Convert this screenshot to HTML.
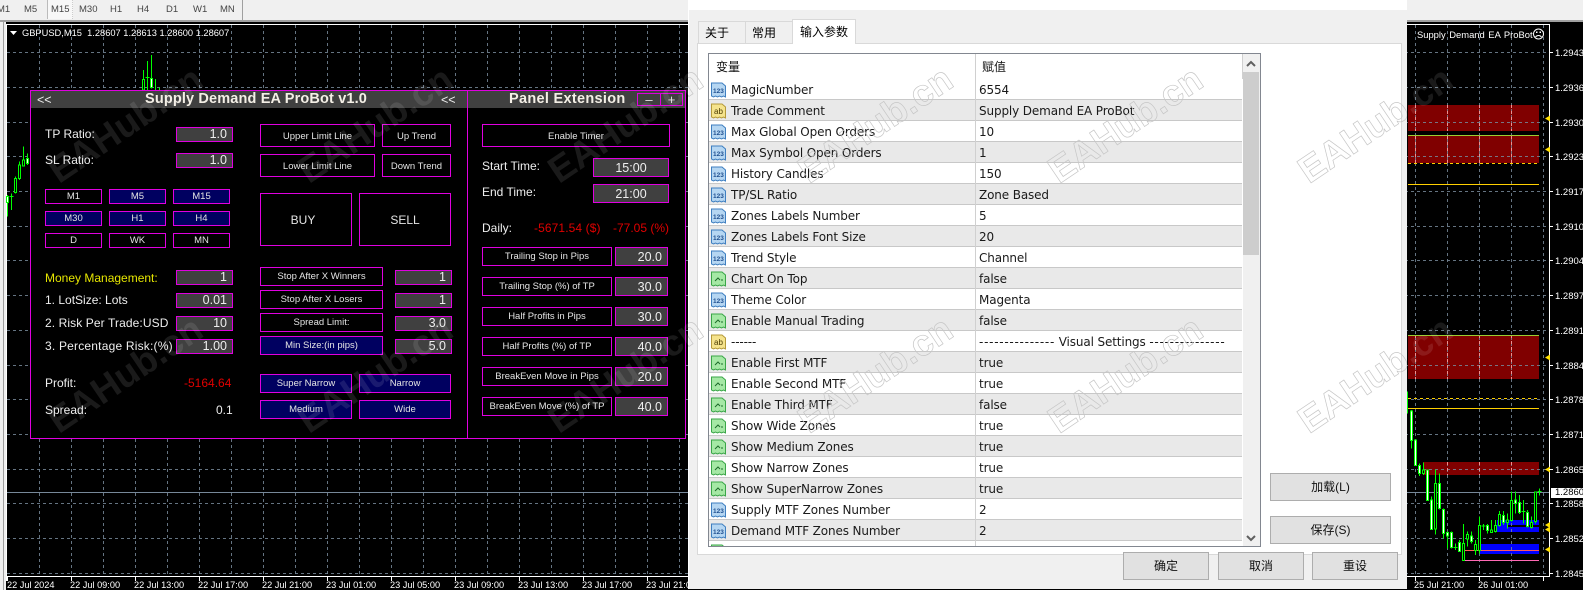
<!DOCTYPE html>
<html><head><meta charset="utf-8"><style>
html,body{margin:0;padding:0;background:#000;overflow:hidden}
#r{position:relative;width:1583px;height:590px;overflow:hidden;background:#000;font-family:"Liberation Sans",sans-serif}
#r div,#r span{position:absolute;box-sizing:border-box;white-space:nowrap}
.t{font-size:9.5px;color:#444;top:4px}
.x{font-size:9.2px;color:#fff;top:580px}
.y{font-size:9.5px;color:#fff;left:1555px}
.b,.n,.v{border:1px solid #e000e0;color:#e4e4e4;text-align:center;font-size:9.5px}
.n{background:#000060}
.b{background:#000}
.v{background:#404040;font-size:12.5px;color:#eee;text-align:right;padding-right:5px}
.c{text-align:center;padding:0}
.l{font-size:12px;color:#eee;left:45px}
.q{left:482px}
.d{background:#e1e1e1;border:1px solid #adadad;font:12px "Liberation Sans","Noto Sans CJK SC",sans-serif;color:#111;text-align:center}
.tb{background:#f0f0f0;border:1px solid #d9d9d9;border-bottom:0;font:12px "Noto Sans CJK SC",sans-serif;color:#000;text-align:left;padding-left:6px}
.w{left:0;width:533px;height:21px;border-bottom:1px solid #c8c8c8;background:#fff}
.w.g{background:#e9e9e9}
.w svg{position:absolute;left:2px;top:3px}
.w i{position:absolute;font-style:normal;font:12px/22px "DejaVu Sans",sans-serif;letter-spacing:-.13px;color:#1a1a1a;top:0;left:22px}
.w b{position:absolute;font-weight:normal;font:12px/22px "DejaVu Sans",sans-serif;letter-spacing:-.13px;color:#1a1a1a;top:0;left:270px}
.w u{text-decoration:none;letter-spacing:.74px}
.w text{font:bold 6.5px "Liberation Sans",sans-serif}
</style></head><body><div id="r">

<!-- top toolbar -->
<div style="left:0;top:0;width:1583px;height:20px;background:#f0f0f0"></div>
<div style="left:0;top:20px;width:1583px;height:2px;background:#a0a0a0"></div>
<div style="left:242px;top:0;width:1px;height:20px;background:#a0a0a0"></div>
<div style="left:47px;top:0;width:26px;height:19px;background:#f8f8f8;border-left:1px solid #bbb;border-right:1px dotted #ccc"></div>
<span class="t" style="left:-3px">M1</span><span class="t" style="left:24px">M5</span><span class="t" style="left:51px">M15</span><span class="t" style="left:79px">M30</span><span class="t" style="left:110px">H1</span><span class="t" style="left:137px">H4</span><span class="t" style="left:166px">D1</span><span class="t" style="left:193px">W1</span><span class="t" style="left:220px">MN</span>

<!-- left strip -->
<div style="left:0;top:22px;width:6px;height:568px;background:#f0f0f0"></div>
<div style="left:3px;top:22px;width:1px;height:568px;background:#a0a0a0"></div>
<div style="left:6px;top:24px;width:1px;height:557px;background:#fff"></div>
<div style="left:6px;top:24px;width:1543px;height:1px;background:#fff"></div>
<div style="left:6px;top:576px;width:1543px;height:1px;background:#fff"></div>
<div style="left:1549px;top:24px;width:1px;height:553px;background:#fff"></div>

<svg style="position:absolute;left:0;top:0" width="1583" height="590" shape-rendering="crispEdges">
<!-- zones -->
<g fill="#800000">
<rect x="1408" y="105" width="131" height="26"/>
<rect x="1408" y="136" width="131" height="27"/>
<rect x="1408" y="335" width="131" height="44"/>
<rect x="1423" y="462" width="116" height="13"/>
</g>
<g fill="#0000ff">
<rect x="1497" y="520" width="42" height="12"/>
<rect x="1480" y="544" width="59" height="10"/>
</g>
<rect x="1508" y="525" width="31" height="2" fill="#000"/>
<!-- grid -->
<path fill="none" stroke="#778899" stroke-opacity=".85" stroke-dasharray="3 3" d="M39.5 25V576M71.5 25V576M103.5 25V576M135.5 25V576M167.5 25V576M199.5 25V576M231.5 25V576M263.5 25V576M295.5 25V576M327.5 25V576M359.5 25V576M391.5 25V576M423.5 25V576M455.5 25V576M487.5 25V576M519.5 25V576M551.5 25V576M583.5 25V576M615.5 25V576M647.5 25V576M679.5 25V576M1415.5 25V576M1447.5 25V576M1479.5 25V576M1511.5 25V576M1543.5 25V576"/>
<path fill="none" stroke="#778899" stroke-opacity=".85" stroke-dasharray="3 3" d="M7 52.5H1549M7 87.5H1549M7 122.5H1549M7 156.5H1549M7 191.5H1549M7 226.5H1549M7 260.5H1549M7 295.5H1549M7 330.5H1549M7 365.5H1549M7 399.5H1549M7 434.5H1549M7 469.5H1549M7 503.5H1549M7 538.5H1549M7 573.5H1549"/>
<path fill="none" stroke="#ef9090" stroke-dasharray="3 3" d="M1415.5 105V131M1447.5 105V131M1479.5 105V131M1511.5 105V131M1415.5 136V163M1447.5 136V163M1479.5 136V163M1511.5 136V163M1415.5 335V379M1447.5 335V379M1479.5 335V379M1511.5 335V379M1447.5 462V475M1479.5 462V475M1511.5 462V475"/>
<!-- price line -->
<path stroke="#778899" d="M7 492.5H1549"/>
<!-- level lines -->
<path stroke="#9acd32" d="M1408 135.5H1539M1408 335.5H1539"/>
<path stroke="#ffd000" d="M1408 184.5H1539M1408 408.5H1539"/>
<path stroke="#ffd000" stroke-dasharray="3 3" d="M1408 163.5H1539M1408 398.5H1539"/>
<path stroke="#ff5a5a" d="M1465 550.5H1539"/>
<path stroke="#ff69b4" d="M1465 560.5H1539"/>
<!-- left candles -->
<g transform="translate(.167 0) scale(.33333)">
<path stroke="#0f0" stroke-width="3" fill="none" d="M22 585V650M34 580V630M28 590H40M46 530V580M58 485V540M70 440V500M82 460V495M430 210V270M442 183V270M436 232H448M454 165V265M466 237V270M478 262V270"/>
<path stroke="#0f0" stroke-width="3" fill="#fff" d="M19 590h6V607h-6zM79 475h6V490h-6zM451 236h6V262h-6z"/>
<path stroke="#0f0" stroke-width="3" fill="#000" d="M43 535h6V577h-6zM55 495h6V535h-6zM67 480h6V498h-6zM427 238h6V270h-6z"/>
</g>
<!-- right candles -->
<g transform="translate(1380.167 300) scale(.33333)">
<path stroke="#0f0" stroke-width="3" fill="none" d="M82 275V340M94 330V445M106 420V498M118 490V528M130 488V525M142 510V603M154 590V690M166 508V703M178 520V628M190 625V715M202 695V745M214 695V745M226 730V750M220 742H232M238 720V755M250 672V782M262 695V740M274 695V730M286 720V765M298 650V760M310 672V690M304 678H316M322 672V700M334 660V698M346 660V697M358 633V680M370 633V675M382 640V685M394 575V665M406 575V640M418 585V642M430 600V670M424 635H436M442 630V683M454 650V685M466 575V670M478 565V587M472 575H484"/>
<path stroke="#0f0" stroke-width="3" fill="#fff" d="M91 333h6V422h-6zM103 420h6V497h-6zM115 497h6V520h-6zM139 510h6V602h-6zM151 600h6V689h-6zM175 550h6V626h-6zM187 628h6V701h-6zM199 697h6V708h-6zM211 698h6V743h-6zM235 728h6V755h-6zM271 708h6V725h-6zM319 677h6V692h-6zM367 646h6V668h-6zM403 600h6V610h-6zM415 607h6V638h-6zM439 637h6V680h-6z"/>
<path stroke="#0f0" stroke-width="3" fill="#000" d="M127 510h6V521h-6zM163 550h6V687h-6zM247 730h6V781h-6zM259 703h6V717h-6zM283 733h6V752h-6zM295 677h6V752h-6zM331 690h6V697h-6zM343 676h6V695h-6zM355 643h6V676h-6zM379 660h6V668h-6zM391 601h6V662h-6zM451 667h6V683h-6zM463 576h6V665h-6z"/>
</g>
<!-- arrows -->
<g fill="#ffe000" shape-rendering="auto">
<path d="M1545 118.5l5-3v6zM1545 149.5l5-3v6zM1545 357.5l5-3v6zM1545 469.5l5-3v6zM1545 525l5-3v6zM1545 529.5l5-3v6zM1545 549.5l5-3v6z"/>
</g>
<!-- ticks -->
<path stroke="#fff" d="M7.5 576V581M71.5 576V581M135.5 576V581M199.5 576V581M263.5 576V581M327.5 576V581M391.5 576V581M455.5 576V581M519.5 576V581M583.5 576V581M647.5 576V581M1415.5 576V581M1479.5 576V581M1543.5 576V581M1549 52.5H1553M1549 87.5H1553M1549 122.5H1553M1549 156.5H1553M1549 191.5H1553M1549 226.5H1553M1549 260.5H1553M1549 295.5H1553M1549 330.5H1553M1549 365.5H1553M1549 399.5H1553M1549 434.5H1553M1549 469.5H1553M1549 503.5H1553M1549 538.5H1553M1549 573.5H1553"/>
<!-- chart header triangle -->
<path fill="#fff" d="M10 31h7l-3.500 4z" shape-rendering="auto"/>
<!-- sad face -->
<g fill="none" stroke="#fff" shape-rendering="auto">
<circle cx="1538.500" cy="34" r="5"/>
<path d="M1535.500 37c1.500-2 4.500-2 6 0"/>
</g>
<path fill="#fff" d="M1536 31.500h1.500v1.500h-1.500zM1539.500 31.500h1.500v1.500h-1.500z"/>
</svg>

<span style="left:22px;top:28px;font-size:9.3px;color:#fff">GBPUSD,M15&nbsp; 1.28607 1.28613 1.28600 1.28607</span>
<span style="left:1417px;top:29px;font-size:9.4px;color:#fff;word-spacing:1px">Supply Demand EA ProBot</span>

<!-- right axis -->
<span class="y" style="top:48px">1.2943</span><span class="y" style="top:83px">1.2936</span><span class="y" style="top:118px">1.2930</span><span class="y" style="top:152px">1.2923</span><span class="y" style="top:187px">1.2917</span><span class="y" style="top:222px">1.2910</span><span class="y" style="top:256px">1.2904</span><span class="y" style="top:291px">1.2897</span><span class="y" style="top:326px">1.2891</span><span class="y" style="top:361px">1.2884</span><span class="y" style="top:395px">1.2878</span><span class="y" style="top:430px">1.2871</span><span class="y" style="top:465px">1.2865</span><span class="y" style="top:499px">1.2858</span><span class="y" style="top:534px">1.2852</span><span class="y" style="top:569px">1.2845</span>
<div style="left:1551px;top:488px;width:32px;height:10px;background:#fff"></div>
<span class="y" style="top:487px;color:#000">1.2860</span>

<!-- bottom axis -->
<span class="x" style="left:7px">22 Jul 2024</span><span class="x" style="left:70px">22 Jul 09:00</span><span class="x" style="left:134px">22 Jul 13:00</span><span class="x" style="left:198px">22 Jul 17:00</span><span class="x" style="left:262px">22 Jul 21:00</span><span class="x" style="left:326px">23 Jul 01:00</span><span class="x" style="left:390px">23 Jul 05:00</span><span class="x" style="left:454px">23 Jul 09:00</span><span class="x" style="left:518px">23 Jul 13:00</span><span class="x" style="left:582px">23 Jul 17:00</span><span class="x" style="left:646px">23 Jul 21:00</span><span class="x" style="left:1414px">25 Jul 21:00</span><span class="x" style="left:1478px">26 Jul 01:00</span>

<!-- panel -->
<div style="left:30px;top:90px;width:656px;height:349px;background:#000;border:1px solid #e000e0"></div>
<div style="left:31px;top:91px;width:654px;height:17px;background:#404040"></div>
<div style="left:467px;top:91px;width:1px;height:347px;background:#e000e0"></div>
<span style="left:37px;top:93px;font-size:12.5px;color:#eee">&lt;&lt;</span>
<span style="left:441px;top:93px;font-size:12.5px;color:#eee">&lt;&lt;</span>
<span style="left:145px;top:91px;font-size:14.5px;font-weight:bold;color:#f4efe6;letter-spacing:.15px">Supply Demand EA ProBot v1.0</span>
<span style="left:509px;top:91px;font-size:14.5px;font-weight:bold;color:#f4efe6;letter-spacing:.3px">Panel Extension</span>
<div class="b" style="left:637px;top:93px;width:24px;height:13px;background:#404040;font-size:13px;line-height:11px">–</div>
<div class="b" style="left:660px;top:93px;width:23px;height:13px;background:#404040;font-size:13px;line-height:11px">+</div>

<span class="l" style="top:127px">TP Ratio:</span>
<span class="l" style="top:153px">SL Ratio:</span>
<div class="v" style="left:176px;top:127px;width:57px;height:15px;line-height:13px">1.0</div>
<div class="v" style="left:176px;top:153px;width:57px;height:15px;line-height:13px">1.0</div>

<div class="b" style="left:45px;top:189px;width:57px;height:15px;line-height:13px">M1</div>
<div class="n" style="left:109px;top:189px;width:57px;height:15px;line-height:13px">M5</div>
<div class="n" style="left:173px;top:189px;width:57px;height:15px;line-height:13px">M15</div>
<div class="n" style="left:45px;top:211px;width:57px;height:15px;line-height:13px">M30</div>
<div class="n" style="left:109px;top:211px;width:57px;height:15px;line-height:13px">H1</div>
<div class="n" style="left:173px;top:211px;width:57px;height:15px;line-height:13px">H4</div>
<div class="b" style="left:45px;top:233px;width:57px;height:15px;line-height:13px">D</div>
<div class="b" style="left:109px;top:233px;width:57px;height:15px;line-height:13px">WK</div>
<div class="b" style="left:173px;top:233px;width:57px;height:15px;line-height:13px">MN</div>

<div class="b" style="left:260px;top:124px;width:115px;height:23px;line-height:23px">Upper Limit Line</div>
<div class="b" style="left:260px;top:154px;width:115px;height:23px;line-height:23px">Lower Limit Line</div>
<div class="b" style="left:382px;top:124px;width:69px;height:23px;line-height:23px">Up Trend</div>
<div class="b" style="left:382px;top:154px;width:69px;height:23px;line-height:23px">Down Trend</div>
<div class="b" style="left:260px;top:193px;width:92px;height:53px;line-height:52px;font-size:12px;padding-right:6px">BUY</div>
<div class="b" style="left:359px;top:193px;width:92px;height:53px;line-height:52px;font-size:12px">SELL</div>

<span class="l" style="top:271px;color:#e6e600">Money Management:</span>
<span class="l" style="top:293px">1. LotSize: Lots</span>
<span class="l" style="top:316px;letter-spacing:.1px">2. Risk Per Trade:USD</span>
<span class="l" style="top:339px;letter-spacing:.2px">3. Percentage Risk:(%)</span>
<span class="l" style="top:376px">Profit:</span>
<span class="l" style="top:403px">Spread:</span>
<div class="v" style="left:176px;top:270px;width:57px;height:15px;line-height:13px">1</div>
<div class="v" style="left:176px;top:293px;width:57px;height:15px;line-height:13px">0.01</div>
<div class="v" style="left:176px;top:316px;width:57px;height:15px;line-height:13px">10</div>
<div class="v" style="left:176px;top:339px;width:57px;height:15px;line-height:13px">1.00</div>
<span style="left:184px;top:376px;font-size:12px;color:#e00000">-5164.64</span>
<span style="left:216px;top:403px;font-size:12px;color:#eee">0.1</span>

<div class="b" style="left:260px;top:267px;width:123px;height:19px;line-height:18px">Stop After X Winners</div>
<div class="b" style="left:260px;top:290px;width:123px;height:19px;line-height:18px">Stop After X Losers</div>
<div class="b" style="left:260px;top:313px;width:123px;height:19px;line-height:18px">Spread Limit:</div>
<div class="n" style="left:260px;top:336px;width:123px;height:19px;line-height:18px">Min Size:(in pips)</div>
<div class="v" style="left:395px;top:270px;width:57px;height:15px;line-height:13px">1</div>
<div class="v" style="left:395px;top:293px;width:57px;height:15px;line-height:13px">1</div>
<div class="v" style="left:395px;top:316px;width:57px;height:15px;line-height:13px">3.0</div>
<div class="v" style="left:395px;top:339px;width:57px;height:15px;line-height:13px">5.0</div>

<div class="n" style="left:260px;top:374px;width:92px;height:19px;line-height:17px">Super Narrow</div>
<div class="n" style="left:359px;top:374px;width:92px;height:19px;line-height:17px">Narrow</div>
<div class="n" style="left:260px;top:400px;width:92px;height:19px;line-height:17px">Medium</div>
<div class="n" style="left:359px;top:400px;width:92px;height:19px;line-height:17px">Wide</div>

<div class="b" style="left:482px;top:124px;width:188px;height:23px;line-height:23px">Enable Timer</div>
<span class="l q" style="top:159px">Start Time:</span>
<span class="l q" style="top:185px">End Time:</span>
<span class="l q" style="top:221px">Daily:</span>
<span style="left:534px;top:221px;font-size:12px;color:#e00000;letter-spacing:.1px">-5671.54 ($)</span>
<span style="left:613px;top:221px;font-size:12px;color:#e00000">-77.05 (%)</span>
<div class="v c" style="left:593px;top:158px;width:76px;height:19px;line-height:18px">15:00</div>
<div class="v c" style="left:593px;top:184px;width:76px;height:19px;line-height:18px">21:00</div>

<div class="b" style="left:482px;top:247px;width:130px;height:19px;line-height:18px">Trailing Stop in Pips</div>
<div class="b" style="left:482px;top:277px;width:130px;height:19px;line-height:18px">Trailing Stop (%) of TP</div>
<div class="b" style="left:482px;top:307px;width:130px;height:19px;line-height:18px">Half Profits in Pips</div>
<div class="b" style="left:482px;top:337px;width:130px;height:19px;line-height:18px">Half Profits (%) of TP</div>
<div class="b" style="left:482px;top:367px;width:130px;height:19px;line-height:18px">BreakEven Move in Pips</div>
<div class="b" style="left:482px;top:397px;width:130px;height:19px;line-height:18px">BreakEven Move (%) of TP</div>
<div class="v" style="left:615px;top:247px;width:53px;height:19px;line-height:19px">20.0</div>
<div class="v" style="left:615px;top:277px;width:53px;height:19px;line-height:19px">30.0</div>
<div class="v" style="left:615px;top:307px;width:53px;height:19px;line-height:19px">30.0</div>
<div class="v" style="left:615px;top:337px;width:53px;height:19px;line-height:19px">40.0</div>
<div class="v" style="left:615px;top:367px;width:53px;height:19px;line-height:19px">20.0</div>
<div class="v" style="left:615px;top:397px;width:53px;height:19px;line-height:19px">40.0</div>

<!-- watermark over chart -->
<svg style="position:absolute;left:0;top:0" width="1583" height="590">
<g font-family="Liberation Sans" font-weight="bold" font-size="37" fill="#fff" fill-opacity=".1" text-anchor="middle">
<text transform="translate(125 124) rotate(-34)" y="13">EAHub.cn</text>
<text transform="translate(375 124) rotate(-34)" y="13">EAHub.cn</text>
<text transform="translate(625 124) rotate(-34)" y="13">EAHub.cn</text>
<text transform="translate(1375 124) rotate(-34)" y="13">EAHub.cn</text>
<text transform="translate(125 374) rotate(-34)" y="13">EAHub.cn</text>
<text transform="translate(375 374) rotate(-34)" y="13">EAHub.cn</text>
<text transform="translate(625 374) rotate(-34)" y="13">EAHub.cn</text>
<text transform="translate(1375 374) rotate(-34)" y="13">EAHub.cn</text>
</g>
</svg>

<!-- dialog -->
<div style="left:688px;top:0;width:719px;height:589px;background:#f0f0f0"></div>
<div style="left:688px;top:0;width:719px;height:10px;background:#fff"></div>
<div style="left:688px;top:0;width:1px;height:589px;background:#fff"></div>
<div style="left:697px;top:43px;width:705px;height:512px;background:#fff;border:1px solid #d9d9d9"></div>
<div class="tb" style="left:698px;top:21px;width:48px;height:22px;line-height:22px">关于</div>
<div class="tb" style="left:745px;top:21px;width:48px;height:22px;line-height:22px">常用</div>
<div class="tb" style="left:792px;top:19px;width:64px;height:25px;line-height:23px;background:#fff;padding-left:7px">输入参数</div>

<!-- list -->
<div style="left:708px;top:53px;width:553px;height:494px;background:#fff;border:1px solid #828790;overflow:hidden">
<span style="left:7px;top:3px;font:12px/20px 'Noto Sans CJK SC',sans-serif;color:#111">变量</span>
<span style="left:273px;top:3px;font:12px/20px 'Noto Sans CJK SC',sans-serif;color:#111">赋值</span>

<div class="w" style="top:25px"><svg width="16" height="17"><path d="M.5 1H11l3.500 3V15l-2-1-2 1-2-1-2 1-2-1-2 1-2-1z" fill="#b5d6f2" stroke="#3f7fc0"/><text x="2" y="11" fill="#1f4f8f">123</text></svg><i>MagicNumber</i><b>6554</b></div>
<div class="w g" style="top:46px"><svg width="16" height="17"><path d="M.5 1H11l3.500 3V15l-2-1-2 1-2-1-2 1-2-1-2 1-2-1z" fill="#f5e38c" stroke="#b59a3a"/><text x="3" y="11" fill="#4a3a00" style="font-size:8px;font-weight:normal">ab</text></svg><i>Trade Comment</i><b>Supply Demand EA ProBot</b></div>
<div class="w" style="top:67px"><svg width="16" height="17"><path d="M.5 1H11l3.500 3V15l-2-1-2 1-2-1-2 1-2-1-2 1-2-1z" fill="#b5d6f2" stroke="#3f7fc0"/><text x="2" y="11" fill="#1f4f8f">123</text></svg><i>Max Global Open Orders</i><b>10</b></div>
<div class="w g" style="top:88px"><svg width="16" height="17"><path d="M.5 1H11l3.500 3V15l-2-1-2 1-2-1-2 1-2-1-2 1-2-1z" fill="#b5d6f2" stroke="#3f7fc0"/><text x="2" y="11" fill="#1f4f8f">123</text></svg><i>Max Symbol Open Orders</i><b>1</b></div>
<div class="w" style="top:109px"><svg width="16" height="17"><path d="M.5 1H11l3.500 3V15l-2-1-2 1-2-1-2 1-2-1-2 1-2-1z" fill="#b5d6f2" stroke="#3f7fc0"/><text x="2" y="11" fill="#1f4f8f">123</text></svg><i>History Candles</i><b>150</b></div>
<div class="w g" style="top:130px"><svg width="16" height="17"><path d="M.5 1H11l3.500 3V15l-2-1-2 1-2-1-2 1-2-1-2 1-2-1z" fill="#b5d6f2" stroke="#3f7fc0"/><text x="2" y="11" fill="#1f4f8f">123</text></svg><i>TP/SL Ratio</i><b>Zone Based</b></div>
<div class="w" style="top:151px"><svg width="16" height="17"><path d="M.5 1H11l3.500 3V15l-2-1-2 1-2-1-2 1-2-1-2 1-2-1z" fill="#b5d6f2" stroke="#3f7fc0"/><text x="2" y="11" fill="#1f4f8f">123</text></svg><i>Zones Labels Number</i><b>5</b></div>
<div class="w g" style="top:172px"><svg width="16" height="17"><path d="M.5 1H11l3.500 3V15l-2-1-2 1-2-1-2 1-2-1-2 1-2-1z" fill="#b5d6f2" stroke="#3f7fc0"/><text x="2" y="11" fill="#1f4f8f">123</text></svg><i>Zones Labels Font Size</i><b>20</b></div>
<div class="w" style="top:193px"><svg width="16" height="17"><path d="M.5 1H11l3.500 3V15l-2-1-2 1-2-1-2 1-2-1-2 1-2-1z" fill="#b5d6f2" stroke="#3f7fc0"/><text x="2" y="11" fill="#1f4f8f">123</text></svg><i>Trend Style</i><b>Channel</b></div>
<div class="w g" style="top:214px"><svg width="16" height="17"><path d="M.5 1H11l3.500 3V15l-2-1-2 1-2-1-2 1-2-1-2 1-2-1z" fill="#a5e8a5" stroke="#3aa648"/><path d="M4 10l3-3 2 2M10 9h2" fill="none" stroke="#1c6b2a"/></svg><i>Chart On Top</i><b>false</b></div>
<div class="w" style="top:235px"><svg width="16" height="17"><path d="M.5 1H11l3.500 3V15l-2-1-2 1-2-1-2 1-2-1-2 1-2-1z" fill="#b5d6f2" stroke="#3f7fc0"/><text x="2" y="11" fill="#1f4f8f">123</text></svg><i>Theme Color</i><b>Magenta</b></div>
<div class="w g" style="top:256px"><svg width="16" height="17"><path d="M.5 1H11l3.500 3V15l-2-1-2 1-2-1-2 1-2-1-2 1-2-1z" fill="#a5e8a5" stroke="#3aa648"/><path d="M4 10l3-3 2 2M10 9h2" fill="none" stroke="#1c6b2a"/></svg><i>Enable Manual Trading</i><b>false</b></div>
<div class="w" style="top:277px"><svg width="16" height="17"><path d="M.5 1H11l3.500 3V15l-2-1-2 1-2-1-2 1-2-1-2 1-2-1z" fill="#f5e38c" stroke="#b59a3a"/><text x="3" y="11" fill="#4a3a00" style="font-size:8px;font-weight:normal">ab</text></svg><i>------</i><b><u>---------------</u> Visual Settings <u>---------------</u></b></div>
<div class="w g" style="top:298px"><svg width="16" height="17"><path d="M.5 1H11l3.500 3V15l-2-1-2 1-2-1-2 1-2-1-2 1-2-1z" fill="#a5e8a5" stroke="#3aa648"/><path d="M4 10l3-3 2 2M10 9h2" fill="none" stroke="#1c6b2a"/></svg><i>Enable First MTF</i><b>true</b></div>
<div class="w" style="top:319px"><svg width="16" height="17"><path d="M.5 1H11l3.500 3V15l-2-1-2 1-2-1-2 1-2-1-2 1-2-1z" fill="#a5e8a5" stroke="#3aa648"/><path d="M4 10l3-3 2 2M10 9h2" fill="none" stroke="#1c6b2a"/></svg><i>Enable Second MTF</i><b>true</b></div>
<div class="w g" style="top:340px"><svg width="16" height="17"><path d="M.5 1H11l3.500 3V15l-2-1-2 1-2-1-2 1-2-1-2 1-2-1z" fill="#a5e8a5" stroke="#3aa648"/><path d="M4 10l3-3 2 2M10 9h2" fill="none" stroke="#1c6b2a"/></svg><i>Enable Third MTF</i><b>false</b></div>
<div class="w" style="top:361px"><svg width="16" height="17"><path d="M.5 1H11l3.500 3V15l-2-1-2 1-2-1-2 1-2-1-2 1-2-1z" fill="#a5e8a5" stroke="#3aa648"/><path d="M4 10l3-3 2 2M10 9h2" fill="none" stroke="#1c6b2a"/></svg><i>Show Wide Zones</i><b>true</b></div>
<div class="w g" style="top:382px"><svg width="16" height="17"><path d="M.5 1H11l3.500 3V15l-2-1-2 1-2-1-2 1-2-1-2 1-2-1z" fill="#a5e8a5" stroke="#3aa648"/><path d="M4 10l3-3 2 2M10 9h2" fill="none" stroke="#1c6b2a"/></svg><i>Show Medium Zones</i><b>true</b></div>
<div class="w" style="top:403px"><svg width="16" height="17"><path d="M.5 1H11l3.500 3V15l-2-1-2 1-2-1-2 1-2-1-2 1-2-1z" fill="#a5e8a5" stroke="#3aa648"/><path d="M4 10l3-3 2 2M10 9h2" fill="none" stroke="#1c6b2a"/></svg><i>Show Narrow Zones</i><b>true</b></div>
<div class="w g" style="top:424px"><svg width="16" height="17"><path d="M.5 1H11l3.500 3V15l-2-1-2 1-2-1-2 1-2-1-2 1-2-1z" fill="#a5e8a5" stroke="#3aa648"/><path d="M4 10l3-3 2 2M10 9h2" fill="none" stroke="#1c6b2a"/></svg><i>Show SuperNarrow Zones</i><b>true</b></div>
<div class="w" style="top:445px"><svg width="16" height="17"><path d="M.5 1H11l3.500 3V15l-2-1-2 1-2-1-2 1-2-1-2 1-2-1z" fill="#b5d6f2" stroke="#3f7fc0"/><text x="2" y="11" fill="#1f4f8f">123</text></svg><i>Supply MTF Zones Number</i><b>2</b></div>
<div class="w g" style="top:466px"><svg width="16" height="17"><path d="M.5 1H11l3.500 3V15l-2-1-2 1-2-1-2 1-2-1-2 1-2-1z" fill="#b5d6f2" stroke="#3f7fc0"/><text x="2" y="11" fill="#1f4f8f">123</text></svg><i>Demand MTF Zones Number</i><b>2</b></div>
<div class="w" style="top:487px;height:5px;overflow:hidden;border:0"><svg width="16" height="17"><path d="M.5 1H11l3.500 3V15l-2-1-2 1-2-1-2 1-2-1-2 1-2-1z" fill="#a5e8a5" stroke="#3aa648"/></svg></div>

<div style="left:266px;top:0;width:1px;height:492px;background:#d0d0d0"></div>
<div style="left:533px;top:0;width:1px;height:25px;background:#d0d0d0"></div>
<!-- scrollbar -->
<div style="left:534px;top:0;width:17px;height:492px;background:#f0f0f0"></div>
<div style="left:534px;top:18px;width:16px;height:183px;background:#cdcdcd"></div>
<svg style="position:absolute;left:534px;top:0" width="17" height="492"><path d="M4 12l4-4 4 4M4 482l4 4 4-4" fill="none" stroke="#606060" stroke-width="2"/></svg>
</div>

<div class="d" style="left:1270px;top:473px;width:121px;height:28px;line-height:26px">加载(L)</div>
<div class="d" style="left:1270px;top:516px;width:121px;height:28px;line-height:26px">保存(S)</div>
<div class="d" style="left:1123px;top:552px;width:86px;height:28px;line-height:26px">确定</div>
<div class="d" style="left:1218px;top:552px;width:86px;height:28px;line-height:26px">取消</div>
<div class="d" style="left:1312px;top:552px;width:86px;height:28px;line-height:26px">重设</div>

<!-- watermark over dialog (outline) -->
<div style="left:688px;top:0;width:719px;height:589px;overflow:hidden">
<svg style="position:absolute;left:-688px;top:0" width="1583" height="590">
<g font-family="Liberation Sans" font-weight="bold" font-size="37" fill="none" stroke="#c6c6c6" stroke-width=".7" text-anchor="middle">
<text transform="translate(625 124) rotate(-34)" y="13">EAHub.cn</text>
<text transform="translate(875 124) rotate(-34)" y="13">EAHub.cn</text>
<text transform="translate(1125 124) rotate(-34)" y="13">EAHub.cn</text>
<text transform="translate(1375 124) rotate(-34)" y="13">EAHub.cn</text>
<text transform="translate(625 374) rotate(-34)" y="13">EAHub.cn</text>
<text transform="translate(875 374) rotate(-34)" y="13">EAHub.cn</text>
<text transform="translate(1125 374) rotate(-34)" y="13">EAHub.cn</text>
<text transform="translate(1375 374) rotate(-34)" y="13">EAHub.cn</text>
</g>
</svg>
</div>

</div></body></html>
